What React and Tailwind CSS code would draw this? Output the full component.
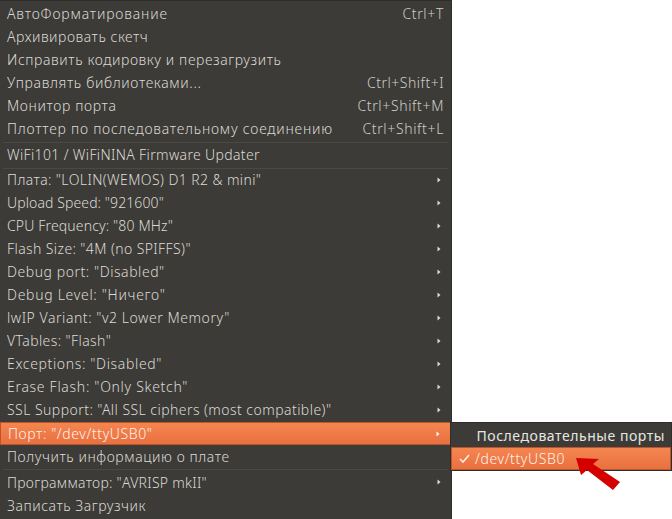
const FONT = "font-['Noto_Sans',sans-serif]";

function Sep({ h = 'h-[3px]' }) {
  return (
    <div className={`${h} flex items-center px-[3px]`}>
      <div className="h-px w-full bg-[#4a4944]" />
    </div>
  );
}

function Chevron() {
  return (
    <svg width="4" height="6" viewBox="0 0 4 6" className="absolute right-[10px] top-[8px]">
      <path d="M0.5 0.5 L3.5 3 L0.5 5.5 Z" fill="currentColor" />
    </svg>
  );
}

function Row({ label, shortcut, sub, active, low, spacing = 'tracking-[0.4px]', keySpacing = 'tracking-[0.65px]' }) {
  const base = `relative flex h-[23px] items-center justify-between pl-[7px] pr-[7px] ${low ? 'pb-[1px]' : 'pb-[3px]'}`;
  if (active) {
    return (
      <div className={`${base} border border-[#b9562c] bg-gradient-to-b from-[#f58650] to-[#e9703f] pl-[4px] text-[#fdf3ec]`}>
        <span className={spacing}>{label}</span>
        {sub && <Chevron />}
      </div>
    );
  }
  return (
    <div className={`${base} text-[#dcdad5]`}>
      <span className={spacing}>{label}</span>
      {shortcut && <span className={`${keySpacing} text-[#cfcdc7]`}>{shortcut}</span>}
      {sub && <Chevron />}
    </div>
  );
}

const TOOLS = [
  { label: 'АвтоФорматирование', shortcut: 'Ctrl+T', spacing: 'tracking-[0.85px]' },
  { label: 'Архивировать скетч', spacing: 'tracking-[0.55px]' },
  { label: 'Исправить кодировку и перезагрузить', spacing: 'tracking-[0.6px]' },
  { label: 'Управлять библиотеками...', shortcut: 'Ctrl+Shift+I', spacing: 'tracking-[0.65px]', keySpacing: 'tracking-[0.5px]' },
  { label: 'Монитор порта', shortcut: 'Ctrl+Shift+M', spacing: 'tracking-[0.65px]' },
  { label: 'Плоттер по последовательному соединению', shortcut: 'Ctrl+Shift+L', spacing: 'tracking-[0.78px]' },
];

const BOARD = [
  { label: 'Плата: "LOLIN(WEMOS) D1 R2 & mini"', spacing: 'tracking-[0.4px]' },
  { label: 'Upload Speed: "921600"', spacing: 'tracking-[0.1px]' },
  { label: 'CPU Frequency: "80 MHz"', spacing: 'tracking-[0.15px]' },
  { label: 'Flash Size: "4M (no SPIFFS)"', spacing: 'tracking-[0.4px]' },
  { label: 'Debug port: "Disabled"', spacing: 'tracking-[0.55px]' },
  { label: 'Debug Level: "Ничего"', spacing: 'tracking-[0.7px]' },
  { label: 'lwIP Variant: "v2 Lower Memory"', spacing: 'tracking-[0.55px]' },
  { label: 'VTables: "Flash"', spacing: 'tracking-[0.4px]' },
  { label: 'Exceptions: "Disabled"', spacing: 'tracking-[0.65px]' },
  { label: 'Erase Flash: "Only Sketch"', spacing: 'tracking-[0.7px]' },
  { label: 'SSL Support: "All SSL ciphers (most compatible)"', spacing: 'tracking-[0.45px]' },
];

export default function App() {
  return (
    <div className={`relative h-[519px] w-[672px] overflow-hidden bg-white text-[14px] font-light ${FONT}`}>
      <div className="h-[519px] w-[452px] border-r border-t border-[#2e2d29] bg-[#3c3b37] pt-[2px]">
        {TOOLS.map(item => <Row key={item.label} {...item} />)}
        <Sep />
        <Row label="WiFi101 / WiFiNINA Firmware Updater" spacing="tracking-[0.35px]" />
        <Sep h="h-[2px]" />
        {BOARD.map(item => <Row key={item.label} {...item} sub />)}
        <Row label={'Порт: "/dev/ttyUSB0"'} sub active low spacing="tracking-[0.6px]" />
        <Row label="Получить информацию о плате" low spacing="tracking-[0.58px]" />
        <Sep />
        <Row label={'Программатор: "AVRISP mkII"'} sub low spacing="tracking-[0.28px]" />
        <Row label="Записать Загрузчик" low spacing="tracking-[0.55px]" />
      </div>

      {/* port submenu */}
      <div className="absolute left-[450px] top-[422px] h-[49px] w-[222px] border border-[#2e2d29] bg-[#3c3b37] pt-[1px]">
        <div className="flex h-[23px] items-center justify-end pr-[6px] font-normal tracking-[0.55px] text-[#e8e6e1]">Последовательные порты</div>
        <div className="flex h-[23px] items-center gap-[5px] border border-[#b9562c] bg-gradient-to-b from-[#f58650] to-[#e9703f] pl-[7px] text-[#fdf3ec]">
          <svg width="11" height="9" viewBox="0 0 11 9" fill="none">
            <path d="M1 5 L4 8 L10 1" stroke="#fdf3ec" strokeWidth="1.6" />
          </svg>
          <span className="tracking-[0.6px]">/dev/ttyUSB0</span>
        </div>
      </div>

      {/* red pointer */}
      <svg width="50" height="40" viewBox="0 0 50 40" className="absolute left-[574px] top-[455px]">
        <path d="M2 3 L25 4 L19 9 L46 27 L39 35 L13 15 L7 20 Z" fill="#d40000" />
      </svg>
    </div>
  );
}
